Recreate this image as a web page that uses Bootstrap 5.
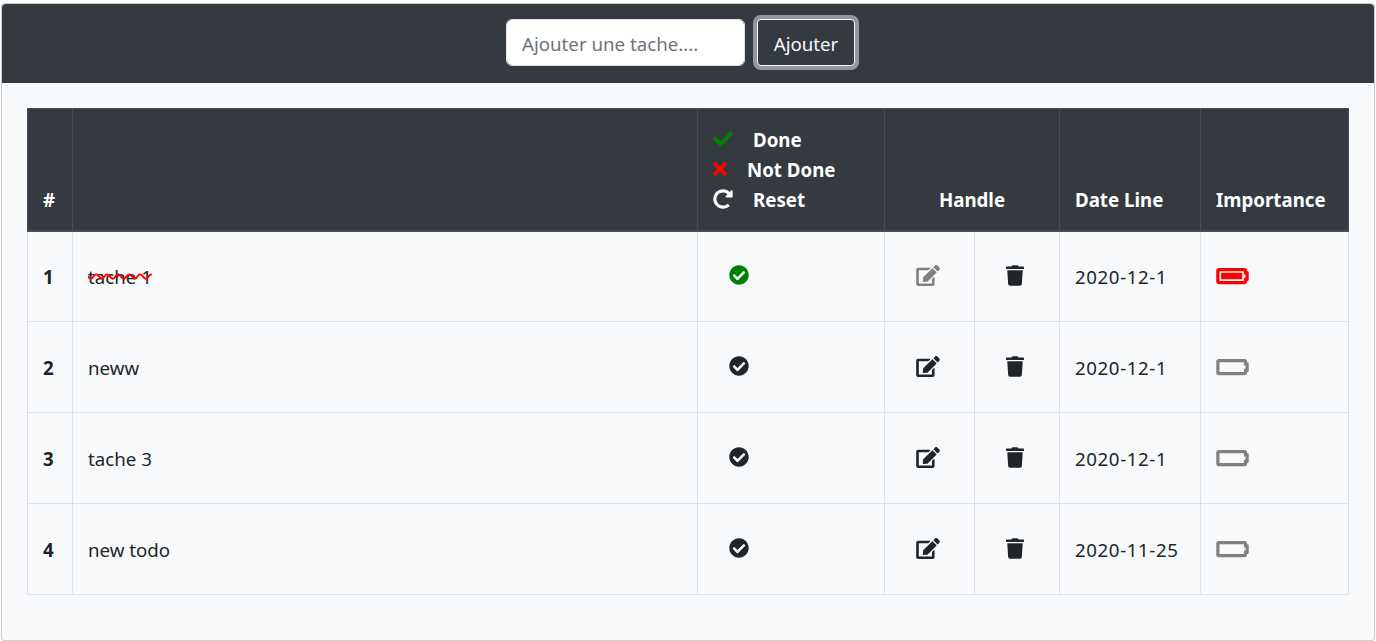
<!DOCTYPE html>
<html lang="fr">
<head>
    <meta charset="UTF-8">
    <meta name="viewport" content="width=device-width, initial-scale=1.0">
    <title>Todo list</title>
    <link href="https://cdn.jsdelivr.net/npm/bootstrap@5.3.0/dist/css/bootstrap.min.css" rel="stylesheet">
    <style>
        body {
            font-family: "Noto Sans", "Open Sans", sans-serif;
            font-size: 18.7px;
            color: #212529;
            padding: 3px 1px 0 1px;
        }
        .todo-card {
            height: 638px;
            background: #f8f9fa;
            border-radius: 4px;
        }
        .todo-head {
            background: #343a40;
            padding: 15px 16px 17px;
            border-radius: 4px 4px 0 0;
        }
        .todo-form {
            margin-right: 15px;
        }
        .todo-input {
            width: 239px;
            height: 47px;
            font-size: 18.7px;
            padding: 8px 15px 6px;
        }
        .todo-input::placeholder {
            color: #6c757d;
        }
        .todo-add {
            height: 47px;
            width: 98px;
            padding: 3px 0 0;
            font-size: 18.7px;
            color: #f8f9fa;
            border: 1px solid #f8f9fa;
            border-radius: 4px;
            background: #343a40;
            box-shadow: 0 0 0 4px #93979b;
        }
        .todo-body {
            padding: 25px;
        }
        .todo-table {
            table-layout: fixed;
            width: 1322px;
            margin: 0;
            --bs-table-bg: transparent;
        }
        .todo-table th, .todo-table td {
            padding: 15px;
            border: 1px solid #dee2e6;
        }
        .todo-table thead th {
            background: #343a40;
            color: #fff;
            border-color: #454d55;
            border-bottom: 2px solid #454d55;
            vertical-align: bottom;
            height: 122px;
            font-weight: 700;
        }
        .todo-table tbody tr {
            height: 91px;
        }
        .todo-table tbody th, .todo-table tbody td {
            vertical-align: middle;
            padding-top: 16px;
            padding-bottom: 14px;
        }
        .col-num { width: 45px; }
        .col-status { width: 187px; }
        .col-edit { width: 90px; }
        .col-trash { width: 85px; }
        .col-date { width: 141px; }
        .col-imp { width: 148px; }
        .legend-row {
            display: flex;
            align-items: center;
            gap: 20px;
            height: 30px;
        }
        .legend-row svg {
            height: 20px;
            flex: none;
            margin-top: -4px;
        }
        .legend-check { width: 20px; fill: green; }
        .legend-times { width: 14px; fill: red; }
        .legend-redo { width: 20px; fill: #fff; }
        .legend-stack {
            margin-bottom: -1px;
        }
        .ico-status { width: 20px; height: 20px; margin: -5px 0 0 16px; display: block; fill: #212529; }
        .ico-edit { width: 24px; height: 21px; margin: -3px 0 0 16px; display: block; fill: #212529; }
        .ico-trash { width: 18px; height: 21px; margin: -3px 0 0 16px; display: block; fill: #212529; }
        .ico-batt { width: 33px; height: 26px; margin: -3px 0 0 0; display: block; fill: #808080; }
        .is-done .ico-status { fill: green; }
        .is-done .ico-edit { fill: #808080; }
        .is-done .ico-batt { fill: red; }
        .strike {
            text-decoration: line-through wavy red 2px;
        }
        .date-text {
            letter-spacing: .6px;
        }
    </style>
</head>
<body>
    <svg class="d-none">
        <symbol id="i-check" viewBox="0 0 512 512"><path d="M173.898 439.404l-166.4-166.4c-9.997-9.997-9.997-26.206 0-36.204l36.203-36.204c9.997-9.998 26.207-9.998 36.204 0L192 312.69 432.095 72.596c9.997-9.997 26.207-9.997 36.204 0l36.203 36.204c9.997 9.997 9.997 26.206 0 36.204l-294.4 294.401c-9.998 9.997-26.207 9.997-36.204-.001z"/></symbol>
        <symbol id="i-times" viewBox="0 0 352 512"><path d="M242.72 256l100.07-100.07c12.28-12.28 12.28-32.19 0-44.48l-22.24-22.24c-12.28-12.28-32.19-12.28-44.48 0L176 189.28 75.93 89.21c-12.28-12.28-32.19-12.28-44.48 0L9.21 111.45c-12.28 12.28-12.28 32.19 0 44.48L109.28 256 9.21 356.07c-12.28 12.28-12.28 32.19 0 44.48l22.24 22.24c12.28 12.28 32.2 12.28 44.48 0L176 322.72l100.07 100.07c12.28 12.28 32.2 12.28 44.48 0l22.24-22.24c12.28-12.28 12.28-32.19 0-44.48L242.72 256z"/></symbol>
        <symbol id="i-redo" viewBox="0 0 512 512"><path d="M256.455 8c66.269.119 126.437 26.233 170.859 68.685l35.715-35.715C478.149 25.851 504 36.559 504 57.941V192c0 13.255-10.745 24-24 24H345.941c-21.382 0-32.09-25.851-16.971-40.971l41.75-41.75c-30.864-28.899-70.801-44.907-113.23-45.273-92.398-.798-170.283 73.977-169.484 169.442C88.764 348.009 162.184 424 256 424c41.127 0 79.997-14.678 110.629-41.556 4.743-4.161 11.906-3.908 16.368.553l39.662 39.662c4.872 4.872 4.631 12.815-.482 17.433C378.202 479.813 319.926 504 256 504 119.034 504 8.001 392.967 8 256.002 7.999 119.193 119.646 7.755 256.455 8z"/></symbol>
        <symbol id="i-circle" viewBox="0 0 512 512"><path d="M504 256c0 136.967-111.033 248-248 248S8 392.967 8 256 119.033 8 256 8s248 111.033 248 248zM227.314 387.314l184-184c6.248-6.248 6.248-16.379 0-22.627l-22.627-22.627c-6.248-6.249-16.379-6.249-22.628 0L216 308.118l-70.059-70.059c-6.248-6.248-16.379-6.248-22.628 0l-22.627 22.627c-6.248 6.248-6.248 16.379 0 22.627l104 104c6.249 6.249 16.379 6.249 22.628.001z"/></symbol>
        <symbol id="i-edit" viewBox="0 0 576 512"><path d="M402.6 83.2l90.2 90.2c3.8 3.8 3.8 10 0 13.8L274.4 405.6l-92.8 10.3c-12.4 1.4-22.9-9.1-21.5-21.5l10.3-92.8L388.8 83.2c3.8-3.8 10-3.8 13.8 0zm162-22.9l-48.8-48.8c-15.2-15.2-39.9-15.2-55.2 0l-35.4 35.4c-3.8 3.8-3.8 10 0 13.8l90.2 90.2c3.8 3.8 10 3.8 13.8 0l35.4-35.4c15.2-15.3 15.2-40 0-55.2zM384 346.2V448H64V128h229.8c3.2 0 6.2-1.3 8.5-3.5l40-40c7.6-7.6 2.2-20.5-8.5-20.5H48C21.5 64 0 85.5 0 112v352c0 26.5 21.5 48 48 48h352c26.5 0 48-21.5 48-48V306.2c0-10.7-12.9-16-20.5-8.5l-40 40c-2.2 2.3-3.5 5.3-3.5 8.5z"/></symbol>
        <symbol id="i-trash" viewBox="0 0 448 512"><path d="M432 32H312l-9.4-18.7A24 24 0 0 0 281.1 0H166.8a23.72 23.72 0 0 0-21.4 13.3L136 32H16A16 16 0 0 0 0 48v32a16 16 0 0 0 16 16h416a16 16 0 0 0 16-16V48a16 16 0 0 0-16-16zM53.2 467a48 48 0 0 0 47.9 45h245.8a48 48 0 0 0 47.9-45L416 128H32z"/></symbol>
        <symbol id="i-batt-empty" viewBox="0 0 640 512"><path d="M544 160v64h32v64h-32v64H64V160h480m16-64H48c-26.51 0-48 21.49-48 48v224c0 26.51 21.49 48 48 48h512c26.51 0 48-21.49 48-48v-16h8c13.255 0 24-10.745 24-24V184c0-13.255-10.745-24-24-24h-8v-16c0-26.51-21.49-48-48-48z"/></symbol>
        <symbol id="i-batt-full" viewBox="0 0 640 512"><path d="M544 160v64h32v64h-32v64H64V160h480m16-64H48c-26.51 0-48 21.49-48 48v224c0 26.51 21.49 48 48 48h512c26.51 0 48-21.49 48-48v-16h8c13.255 0 24-10.745 24-24V184c0-13.255-10.745-24-24-24h-8v-16c0-26.51-21.49-48-48-48zm-48 96H96v128h416V192z"/></symbol>
    </svg>

    <div class="card todo-card">
        <div class="todo-head d-flex justify-content-center">
            <form class="todo-form d-flex gap-2">
                <input type="text" class="form-control todo-input me-1" placeholder="Ajouter une tache....">
                <button type="button" class="btn todo-add">Ajouter</button>
            </form>
        </div>
        <div class="todo-body">
            <table class="table todo-table">
                <colgroup>
                    <col class="col-num">
                    <col>
                    <col class="col-status">
                    <col class="col-edit">
                    <col class="col-trash">
                    <col class="col-date">
                    <col class="col-imp">
                </colgroup>
                <thead>
                    <tr>
                        <th>#</th>
                        <th></th>
                        <th>
                            <div class="legend-stack">
                                <div class="legend-row"><svg class="legend-check"><use href="#i-check"/></svg><span>Done</span></div>
                                <div class="legend-row"><svg class="legend-times"><use href="#i-times"/></svg><span>Not Done</span></div>
                                <div class="legend-row"><svg class="legend-redo"><use href="#i-redo"/></svg><span>Reset</span></div>
                            </div>
                        </th>
                        <th colspan="2" class="text-center">Handle</th>
                        <th>Date Line</th>
                        <th>Importance</th>
                    </tr>
                </thead>
                <tbody>
                    <tr class="is-done">
                        <th>1</th>
                        <td><span class="strike">tache 1</span></td>
                        <td><svg class="ico-status"><use href="#i-circle"/></svg></td>
                        <td><svg class="ico-edit"><use href="#i-edit"/></svg></td>
                        <td><svg class="ico-trash"><use href="#i-trash"/></svg></td>
                        <td class="date-text">2020-12-1</td>
                        <td><svg class="ico-batt"><use href="#i-batt-full"/></svg></td>
                    </tr>
                    <tr>
                        <th>2</th>
                        <td>neww</td>
                        <td><svg class="ico-status"><use href="#i-circle"/></svg></td>
                        <td><svg class="ico-edit"><use href="#i-edit"/></svg></td>
                        <td><svg class="ico-trash"><use href="#i-trash"/></svg></td>
                        <td class="date-text">2020-12-1</td>
                        <td><svg class="ico-batt"><use href="#i-batt-empty"/></svg></td>
                    </tr>
                    <tr>
                        <th>3</th>
                        <td>tache 3</td>
                        <td><svg class="ico-status"><use href="#i-circle"/></svg></td>
                        <td><svg class="ico-edit"><use href="#i-edit"/></svg></td>
                        <td><svg class="ico-trash"><use href="#i-trash"/></svg></td>
                        <td class="date-text">2020-12-1</td>
                        <td><svg class="ico-batt"><use href="#i-batt-empty"/></svg></td>
                    </tr>
                    <tr>
                        <th>4</th>
                        <td>new todo</td>
                        <td><svg class="ico-status"><use href="#i-circle"/></svg></td>
                        <td><svg class="ico-edit"><use href="#i-edit"/></svg></td>
                        <td><svg class="ico-trash"><use href="#i-trash"/></svg></td>
                        <td class="date-text">2020-11-25</td>
                        <td><svg class="ico-batt"><use href="#i-batt-empty"/></svg></td>
                    </tr>
                </tbody>
            </table>
        </div>
    </div>

    <script src="https://cdn.jsdelivr.net/npm/bootstrap@5.3.0/dist/js/bootstrap.bundle.min.js"></script>
</body>
</html>
